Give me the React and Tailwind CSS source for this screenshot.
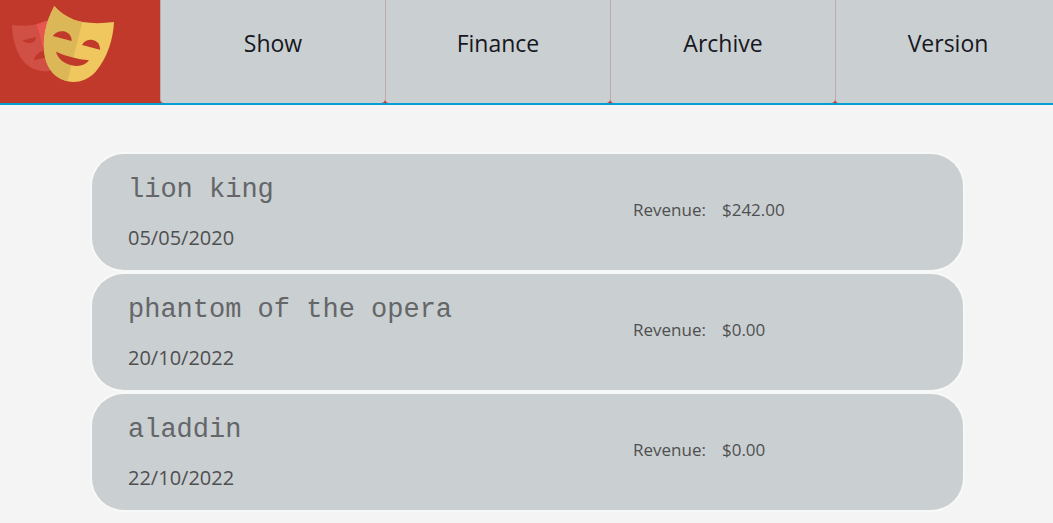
const tabs = ['Show', 'Finance', 'Archive', 'Version'];

const shows = [
  { title: 'lion king', date: '05/05/2020', revenue: '$242.00' },
  { title: 'phantom of the opera', date: '20/10/2022', revenue: '$0.00' },
  { title: 'aladdin', date: '22/10/2022', revenue: '$0.00' },
];

function MasksLogo() {
  return (
    <svg viewBox="0 0 480 309" className="h-[103px] w-40" role="img" aria-label="Theatre masks">
      <path fill="#d15046" d="M36 75C62 79 88 78 112 72L143 62L150 212C136 215 119 214 104 208C57 190 37 129 36 75Z" />
      <path fill="#e8574f" d="M110 73L144 61L132 150Z" />
      <path fill="#c1392b" d="M68 121L108 111C107 124 98 130 87 129C78 129 71 126 68 121Z" />
      <path fill="#c1392b" d="M101 181C106 164 117 154 134 152L136 173Z" />
      <path fill="#efc75e" d="M163 18C184 42 212 59 247 66C279 71 311 70 342 66C340 115 322 175 287 215C263 241 232 250 202 244C169 236 143 211 135 171C125 119 138 64 163 18Z" />
      <path fill="#dbb757" d="M163 18C184 42 212 59 247 66L202 244C169 236 143 211 135 171C125 119 138 64 163 18Z" />
      <g fill="#c1392b">
        <path d="M158 108C166 97 178 92 191 94C206 97 215 108 215 123Z" />
        <path d="M246 135C253 122 266 118 278 120C293 123 300 134 300 149Z" />
        <path d="M168 155C199 169 232 177 267 181C257 194 241 200 222 197C193 192 174 177 168 155Z" />
      </g>
    </svg>
  );
}

function ShowCard({ title, date, revenue }) {
  return (
    <li className="flex h-[116px] items-center rounded-[32px] bg-[#cacfd2] pl-9 text-[#4f4f50] ring-2 ring-[#f7f8f8]">
      <div className="flex w-[505px] shrink-0 flex-col gap-4 pt-1">
        <h2 className="font-['Liberation_Mono',monospace] text-[27px] leading-8 text-[#646668]">{title}</h2>
        <p className="text-[20px] leading-8">{date}</p>
      </div>
      <dl className="flex gap-4 pb-1 text-[17px] leading-6">
        <dt>Revenue:</dt>
        <dd>{revenue}</dd>
      </dl>
    </li>
  );
}

export default function App() {
  return (
    <div className="min-h-screen bg-[#f4f4f4] font-['Open_Sans','Noto_Sans',sans-serif]">
      <header className="flex overflow-hidden border-b-2 border-[#039ed3] bg-[#c1392b]">
        <a href="#home" className="w-40 shrink-0">
          <MasksLogo />
        </a>
        <nav className="flex flex-1 overflow-hidden">
          {tabs.map((tab) => (
            <button
              key={tab}
              type="button"
              className="h-[103px] w-[225px] shrink-0 rounded-b border-l border-[#c3a9a8] bg-[#cacfd2] pb-4 text-[23px] text-[#17171f]"
            >
              {tab}
            </button>
          ))}
        </nav>
      </header>
      <main className="pt-[49px] pr-[90px] pb-3 pl-[92px]">
        <ul className="flex flex-col gap-1">
          {shows.map((show) => (
            <ShowCard key={show.title} {...show} />
          ))}
        </ul>
      </main>
    </div>
  );
}
